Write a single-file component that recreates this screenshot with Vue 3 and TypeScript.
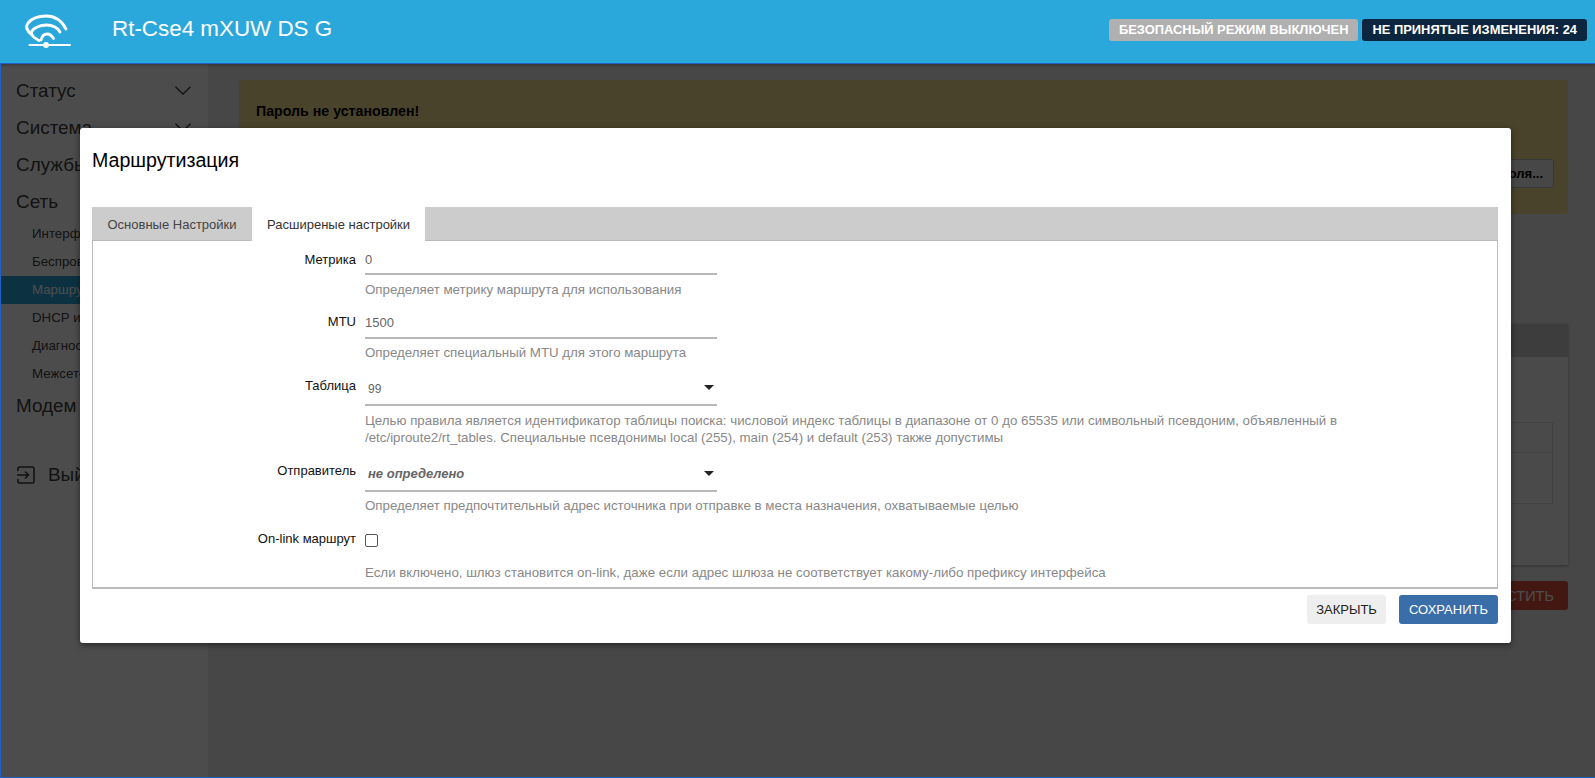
<script setup lang="ts">
const menu = [
  { name: 'Статус' },
  { name: 'Система' },
  { name: 'Службы' },
]
const sub = [
  { name: 'Интерфейсы', active: false },
  { name: 'Беспроводная связь', active: false },
  { name: 'Маршрутизация', active: true },
  { name: 'DHCP и DNS', active: false },
  { name: 'Диагностика', active: false },
  { name: 'Межсетевой экран', active: false },
]
</script>

<template>
  <div class="page">
    <header class="topbar">
      <div class="brand">
        <svg class="logo" width="60" height="40" viewBox="19 10 60 40" fill="none" stroke="#fff" stroke-width="2.8" stroke-linecap="round">
          <path d="M32 35C27 31 25 27 28 23C33 17 40 16 46 16C55 16 62 21 66 29" />
          <path d="M39 40.500C34 38 31 35 31.500 32C33 28 40 25 46.500 25C52 25 57 27 60 32" />
          <path d="M41 40C42 36 44 34 47 34C50 34 52 36 53.500 38.500" />
          <path d="M29.500 45H70" stroke-width="2" />
          <circle cx="46" cy="45" r="3" fill="#fff" stroke="none" />
        </svg>
        <span class="host">Rt-Cse4 mXUW DS G</span>
      </div>
      <div class="badges">
        <span class="badge off">БЕЗОПАСНЫЙ РЕЖИМ ВЫКЛЮЧЕН</span>
        <span class="badge changes">НЕ ПРИНЯТЫЕ ИЗМЕНЕНИЯ: 24</span>
      </div>
    </header>

    <div class="body">
      <aside class="side">
        <div v-for="m in menu" :key="m.name" class="top-item">
          <span>{{ m.name }}</span>
          <svg width="16" height="9" viewBox="0 0 16 9" fill="none" stroke="currentColor" stroke-width="1.400"><path d="M.5.8 8 8l7.500-7.200" /></svg>
        </div>
        <div class="top-item"><span>Сеть</span></div>
        <ul class="sub">
          <li v-for="s in sub" :key="s.name" :class="{ active: s.active }">{{ s.name }}</li>
        </ul>
        <div class="top-item modem"><span>Модем</span></div>
        <div class="logout">
          <svg width="18" height="18" viewBox="0 0 18 18" fill="none" stroke="currentColor" stroke-width="1.600">
            <path d="M1 5V2.500C1 1.600 1.600 1 2.500 1h13c.900 0 1.500.600 1.500 1.500v13c0 .900-.600 1.500-1.500 1.500h-13C1.600 17 1 16.400 1 15.500V13" />
            <path d="M0 9h11M8 5.500 11.500 9 8 12.500" />
          </svg>
          <span>Выйти</span>
        </div>
      </aside>

      <main class="main">
        <section class="warning">
          <strong>Пароль не установлен!</strong>
          <p>Пароль администратора не установлен. Пожалуйста, настройте пароль для защиты веб-интерфейса.</p>
          <div class="warning-foot"><button class="warn-btn">Перейти к настройке пароля...</button></div>
        </section>
        <section class="card">
          <div class="card-head">Статические маршруты IPv4</div>
          <div class="card-body">
            <div class="grid-table">
              <div class="tr">Интерфейс</div>
              <div class="tr tall">lan</div>
            </div>
          </div>
        </section>
        <div class="main-foot"><button class="danger">ОЧИСТИТЬ</button></div>
      </main>
    </div>

    <div class="overlay"></div>
    <div class="frame"></div>

    <div class="modal">
      <h3 class="title">Маршрутизация</h3>
      <nav class="tabs">
        <span class="tab">Основные Настройки</span>
        <span class="tab current">Расширеные настройки</span>
      </nav>
      <div class="pane">
        <div class="row r1">
          <label>Метрика</label>
          <div class="ctl">
            <div class="input">0</div>
            <div class="desc">Определяет метрику маршрута для использования</div>
          </div>
        </div>
        <div class="row r2">
          <label>MTU</label>
          <div class="ctl">
            <div class="input">1500</div>
            <div class="desc">Определяет специальный MTU для этого маршрута</div>
          </div>
        </div>
        <div class="row r3">
          <label>Таблица</label>
          <div class="ctl">
            <div class="input select"><span>99</span><i class="caret"></i></div>
            <div class="desc">Целью правила является идентификатор таблицы поиска: числовой индекс таблицы в диапазоне от 0 до 65535 или символьный псевдоним, объявленный в<br />/etc/iproute2/rt_tables. Специальные псевдонимы local (255), main (254) и default (253) также допустимы</div>
          </div>
        </div>
        <div class="row r4">
          <label>Отправитель</label>
          <div class="ctl">
            <div class="input select"><em>не определено</em><i class="caret"></i></div>
            <div class="desc">Определяет предпочтительный адрес источника при отправке в места назначения, охватываемые целью</div>
          </div>
        </div>
        <div class="row r5">
          <label>On-link маршрут</label>
          <div class="ctl">
            <div class="check"><input type="checkbox" /></div>
            <div class="desc">Если включено, шлюз становится on-link, даже если адрес шлюза не соответствует какому-либо префиксу интерфейса</div>
          </div>
        </div>
      </div>
      <div class="actions">
        <button class="btn close">ЗАКРЫТЬ</button>
        <button class="btn save">СОХРАНИТЬ</button>
      </div>
    </div>
  </div>
</template>

<style>
html, body { margin: 0; height: 100%; overflow: hidden; }
</style>

<style scoped>
* { box-sizing: border-box; }
.page {
  position: relative;
  height: 778px;
  overflow: hidden;
  font-family: "Liberation Sans", Arial, sans-serif;
  color: #000;
  background: #eee;
}
.topbar {
  position: relative;
  z-index: 3;
  height: 64px;
  background: #2ba8db;
  display: flex;
  align-items: flex-start;
  justify-content: space-between;
  padding: 19px 8px 0 0;
  box-shadow: 0 1px 3px rgba(0, 0, 0, .3);
}
.brand { display: flex; align-items: center; margin-top: -9px; }
.logo { margin-left: 19px; }
.host { margin-left: 33px; margin-top: -3px; color: #fff; font-size: 22.4px; }
.badges { display: flex; gap: 4px; }
.badge {
  height: 22px;
  line-height: 22px;
  padding: 0 10px;
  border-radius: 3px;
  color: #fff;
  font-size: 12.9px;
  font-weight: 700;
  white-space: nowrap;
}
.off { background: #b0b0b0; }
.changes { background: #0d2640; }
.body { display: flex; height: 714px; }
.side {
  width: 208px;
  flex: none;
  background: #fff;
  padding-top: 8px;
  color: #404040;
}
.top-item {
  height: 37px;
  padding: 0 17px 0 16px;
  display: flex;
  align-items: center;
  justify-content: space-between;
  font-size: 18.9px;
}
.sub { list-style: none; margin: 0; padding: 0; font-size: 13.3px; }
.sub li { height: 28px; line-height: 28px; padding-left: 32px; }
.sub li.active { background: #2ba8db; color: #fff; }
.modem { margin-top: -1px; }
.logout {
  margin-top: 40px;
  padding-left: 17px;
  display: flex;
  align-items: center;
  gap: 13px;
  font-size: 18.9px;
}
.main { flex: 1; padding: 16px 27px 0 31px; background: #ededed; min-width: 0; }
.warning {
  height: 134px;
  padding: 23px 20px 0 17px;
  background: #f7df8f;
  border-radius: 3px;
  font-size: 14.2px;
}
.warning p { margin: 8px 0 0; font-size: 13px; }
.warning-foot { display: flex; justify-content: flex-end; margin-top: 17px; }
.warn-btn {
  height: 29px;
  margin-right: -6px;
  padding: 0 10px;
  border: 1px solid #bbb;
  border-radius: 3px;
  background: #eee;
  font: 700 13px "Liberation Sans", Arial, sans-serif;
}
.card { margin-top: 110px; height: 241px; background: #f7f7f7; box-shadow: 0 1px 3px rgba(0,0,0,.3); }
.card-head { height: 33px; line-height: 33px; padding-left: 16px; background: #cbcbcb; font-size: 14px; }
.card-body { padding: 65px 15px 0; font-size: 13px; }
.grid-table { height: 82px; border: 1px solid #ddd; }
.tr { height: 30px; padding: 6px; border-bottom: 1px solid #ddd; }
.tr.tall { height: 50px; border-bottom: 0; }
.main-foot { display: flex; justify-content: flex-end; margin-top: 16px; }
.danger {
  height: 29px;
  padding: 0 14px;
  border: 0;
  border-radius: 3px;
  background: #e0503c;
  color: #fff;
  font: 14.5px "Liberation Sans", Arial, sans-serif;
}
.overlay {
  position: absolute;
  inset: 64px 0 0;
  z-index: 1;
  background: rgba(0, 0, 0, .7);
}
.frame {
  position: absolute;
  inset: 63px 0 0;
  z-index: 4;
  border-top: 1px solid #2160c4;
  border-left: 1px solid #2160c4;
  border-bottom: 1px solid #2160c4;
  pointer-events: none;
}
.modal {
  position: absolute;
  z-index: 2;
  left: 80px;
  top: 128px;
  width: 1431px;
  height: 515px;
  padding: 0 13px 0 12px;
  background: #fff;
  border-radius: 3px;
  box-shadow: 0 2px 6px rgba(0, 0, 0, .5);
  display: flex;
  flex-direction: column;
}
.title {
  margin: 0;
  height: 79px;
  padding-top: 21px;
  font-size: 19.6px;
  line-height: 22px;
  font-weight: 400;
}
.tabs { display: flex; height: 34px; flex: none; background: #ccc; }
.tab {
  padding: 0 15.500px;
  line-height: 35px;
  font-size: 13px;
  color: #444;
  white-space: nowrap;
}
.tab.current {
  position: relative;
  z-index: 1;
  height: 34px;
  background: #fff;
  color: #333;
  padding: 0 15px;
}
.pane {
  height: 349px;
  margin-top: -1px;
  border: 1px solid #bbb;
  border-bottom-width: 2px;
  overflow: hidden;
}
.row { display: grid; grid-template-columns: 263px 1fr; column-gap: 9px; }
.row label { text-align: right; font-size: 13px; color: #111; line-height: 16px; }
.r1 label { padding-top: 11px; }
.r1 .input { padding-top: 4px; }
.r1 .desc { margin-top: 7px; }
.r2 { padding-top: 7px; }
.r2 label { padding-top: 9px; }
.r3 { padding-top: 9px; }
.r3 label { padding-top: 8px; }
.r3 .desc { line-height: 17px; }
.r4 { padding-top: 10px; }
.r4 label { padding-top: 7px; }
.r5 { padding-top: 17px; }
.r5 label { padding-top: 0; }
.input {
  width: 352px;
  height: 34px;
  padding-top: 3px;
  line-height: 30px;
  border-bottom: 2px solid #b8b8b8;
  font-size: 13px;
  color: #666;
}
.select {
  height: 36px;
  padding: 2px 0 1px 3px;
  display: flex;
  align-items: center;
  justify-content: space-between;
  font-size: 12px;
}
.select span { padding-top: 2px; }
.select em { font-weight: 700; font-size: 13px; color: #666; }
.caret {
  margin-right: 3px;
  width: 0;
  height: 0;
  border-left: 5px solid transparent;
  border-right: 5px solid transparent;
  border-top: 5px solid #222;
}
.desc { margin-top: 6px; font-size: 13.3px; line-height: 16px; color: #888; white-space: nowrap; }
.check { height: 17px; }
.check input {
  display: block;
  width: 13px;
  height: 13px;
  margin: 3px 0 0;
  appearance: none;
  border: 1px solid #555;
  border-radius: 2px;
  background: #fff;
}
.r5 .desc { margin-top: 14px; }
.actions { display: flex; justify-content: flex-end; gap: 13px; padding: 6px 0 0 0; }
.btn {
  height: 29px;
  padding: 0 9px;
  border: 0;
  border-radius: 3px;
  font: 13px "Liberation Sans", Arial, sans-serif;
}
.close { width: 79px; background: #eee; color: #222; }
.save { width: 99px; background: #3a6ea8; color: #fff; }
</style>
